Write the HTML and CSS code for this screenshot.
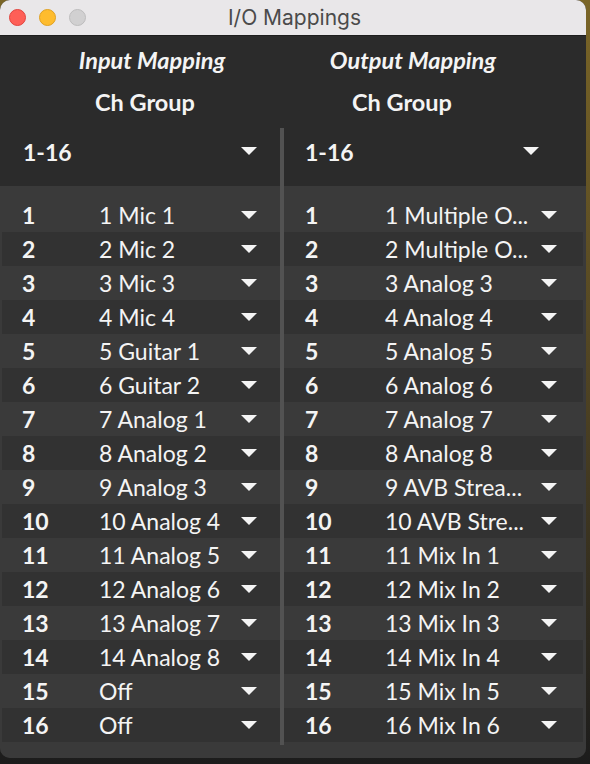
FILE: index.html
```html
<!DOCTYPE html>
<html lang="en">
<head>
    <meta charset="UTF-8">
    <title>I/O Mappings</title>
    <link rel="stylesheet" href="styles.css">
</head>
<body>
    <div class="window">
        <div class="titlebar">
            <div class="lights">
                <span class="light red"></span>
                <span class="light yellow"></span>
                <span class="light gray"></span>
            </div>
            <div class="title">I/O Mappings</div>
            <div></div>
        </div>

        <div class="heads">
            <div class="line">
                <span class="map-in">Input Mapping</span>
                <span class="map-out">Output Mapping</span>
            </div>
            <div class="line group-line">
                <span class="grp-in">Ch Group</span>
                <span class="grp-out">Ch Group</span>
            </div>
        </div>

        <div class="panel">
            <div class="col col-in">
                <div class="chgroup">
                    <span class="num">1-16</span>
                    <span class="arrow"></span>
                </div>
                <div class="list">
                    <div class="row"><span class="num">1</span><span class="name">1 Mic 1</span><span class="arrow"></span></div>
                    <div class="row"><span class="num">2</span><span class="name">2 Mic 2</span><span class="arrow"></span></div>
                    <div class="row"><span class="num">3</span><span class="name">3 Mic 3</span><span class="arrow"></span></div>
                    <div class="row"><span class="num">4</span><span class="name">4 Mic 4</span><span class="arrow"></span></div>
                    <div class="row"><span class="num">5</span><span class="name">5 Guitar 1</span><span class="arrow"></span></div>
                    <div class="row"><span class="num">6</span><span class="name">6 Guitar 2</span><span class="arrow"></span></div>
                    <div class="row"><span class="num">7</span><span class="name">7 Analog 1</span><span class="arrow"></span></div>
                    <div class="row"><span class="num">8</span><span class="name">8 Analog 2</span><span class="arrow"></span></div>
                    <div class="row"><span class="num">9</span><span class="name">9 Analog 3</span><span class="arrow"></span></div>
                    <div class="row"><span class="num">10</span><span class="name">10 Analog 4</span><span class="arrow"></span></div>
                    <div class="row"><span class="num">11</span><span class="name">11 Analog 5</span><span class="arrow"></span></div>
                    <div class="row"><span class="num">12</span><span class="name">12 Analog 6</span><span class="arrow"></span></div>
                    <div class="row"><span class="num">13</span><span class="name">13 Analog 7</span><span class="arrow"></span></div>
                    <div class="row"><span class="num">14</span><span class="name">14 Analog 8</span><span class="arrow"></span></div>
                    <div class="row"><span class="num">15</span><span class="name">Off</span><span class="arrow"></span></div>
                    <div class="row"><span class="num">16</span><span class="name">Off</span><span class="arrow"></span></div>
                </div>
            </div>

            <div class="divider"></div>

            <div class="col col-out">
                <div class="chgroup">
                    <span class="num">1-16</span>
                    <span class="arrow"></span>
                </div>
                <div class="list">
                    <div class="row"><span class="num">1</span><span class="name">1 Multiple O...</span><span class="arrow"></span></div>
                    <div class="row"><span class="num">2</span><span class="name">2 Multiple O...</span><span class="arrow"></span></div>
                    <div class="row"><span class="num">3</span><span class="name">3 Analog 3</span><span class="arrow"></span></div>
                    <div class="row"><span class="num">4</span><span class="name">4 Analog 4</span><span class="arrow"></span></div>
                    <div class="row"><span class="num">5</span><span class="name">5 Analog 5</span><span class="arrow"></span></div>
                    <div class="row"><span class="num">6</span><span class="name">6 Analog 6</span><span class="arrow"></span></div>
                    <div class="row"><span class="num">7</span><span class="name">7 Analog 7</span><span class="arrow"></span></div>
                    <div class="row"><span class="num">8</span><span class="name">8 Analog 8</span><span class="arrow"></span></div>
                    <div class="row"><span class="num">9</span><span class="name">9 AVB Strea...</span><span class="arrow"></span></div>
                    <div class="row"><span class="num">10</span><span class="name">10 AVB Stre...</span><span class="arrow"></span></div>
                    <div class="row"><span class="num">11</span><span class="name">11 Mix In 1</span><span class="arrow"></span></div>
                    <div class="row"><span class="num">12</span><span class="name">12 Mix In 2</span><span class="arrow"></span></div>
                    <div class="row"><span class="num">13</span><span class="name">13 Mix In 3</span><span class="arrow"></span></div>
                    <div class="row"><span class="num">14</span><span class="name">14 Mix In 4</span><span class="arrow"></span></div>
                    <div class="row"><span class="num">15</span><span class="name">15 Mix In 5</span><span class="arrow"></span></div>
                    <div class="row"><span class="num">16</span><span class="name">16 Mix In 6</span><span class="arrow"></span></div>
                </div>
            </div>
        </div>
    </div>
</body>
</html>
```

FILE: styles.css
```css
* {
    box-sizing: border-box;
}

body {
    margin: 0;
    width: 590px;
    height: 764px;
    background: #1c1c1c linear-gradient(to bottom, #7a6527 0, #4a3f22 55%, #1c1c1c 100%);
    overflow: hidden;
}

.window {
    width: 586px;
    height: 758px;
    border-radius: 10px;
    overflow: hidden;
    background-color: #2b2b2b;
    font-family: 'Lato', 'Open Sans', sans-serif;
    color: #f4f4f4;
    display: flex;
    flex-direction: column;
}

/* title bar */
.titlebar {
    height: 36px;
    flex-shrink: 0;
    background-color: #e9e7e9;
    border-bottom: 1px solid #1e1e1e;
    display: grid;
    grid-template-columns: 1fr auto 1fr;
    align-items: center;
    padding-left: 9px;
}

.lights {
    display: flex;
    gap: 13px;
}

.light {
    width: 17px;
    height: 17px;
    border-radius: 50%;
    display: inline-block;
}

.light.red {
    background-color: #fe5f57;
    border: 1px solid #e1443e;
}

.light.yellow {
    background-color: #febc2e;
    border: 1px solid #dfa023;
}

.light.gray {
    background-color: #d1d0d1;
    border: 1px solid #bdbcbd;
}

.title {
    font-family: 'Inter', 'Noto Sans', sans-serif;
    font-size: 21px;
    color: #4b4b4b;
    padding-right: 6px;
}

/* headings */
.heads {
    height: 92px;
    flex-shrink: 0;
    padding-top: 10px;
    font-size: 23.5px;
    font-weight: bold;
    line-height: 28px;
}

.line {
    display: flex;
}

.group-line {
    margin-top: 14px;
}

.map-in,
.map-out {
    font-style: italic;
    text-align: center;
}

.map-in { width: 304px; }
.map-out { width: 218px; }

.grp-in,
.grp-out {
    text-align: center;
}

.grp-in { width: 290px; }
.grp-out { width: 224px; }

/* mapping columns */
.panel {
    flex: 1;
    display: flex;
    background: linear-gradient(#2b2b2b 58px, #3a3a3a 58px);
}

.col-in { width: 280px; }
.col-out { width: 302px; }

.divider {
    width: 4px;
    background-color: #525252;
    margin-bottom: 13px;
}

.chgroup {
    height: 58px;
    display: flex;
    justify-content: space-between;
    align-items: flex-start;
    font-size: 23px;
    line-height: 28px;
}

.chgroup .arrow {
    margin-top: 9px;
}

.col-in .chgroup { padding: 10px 23px 0 23px; }
.col-out .chgroup { padding: 10px 47px 0 21px; }

.list {
    padding-top: 12px;
}

.row {
    height: 34px;
    display: grid;
    align-items: center;
    font-size: 23px;
    line-height: 28px;
}

.row:nth-child(even) {
    background-color: #323232;
}

.col-in .row {
    grid-template-columns: 77px 1fr 16px;
    margin-left: 2px;
    padding: 0 23px 0 20px;
}

.col-out .row {
    grid-template-columns: 80px 1fr 16px;
    margin-right: 3px;
    padding: 0 26px 0 21px;
}

.num {
    font-weight: bold;
}

.name {
    white-space: nowrap;
}

.arrow {
    width: 0;
    height: 0;
    border-left: 8px solid transparent;
    border-right: 8px solid transparent;
    border-top: 8px solid #f4f4f4;
}
```
